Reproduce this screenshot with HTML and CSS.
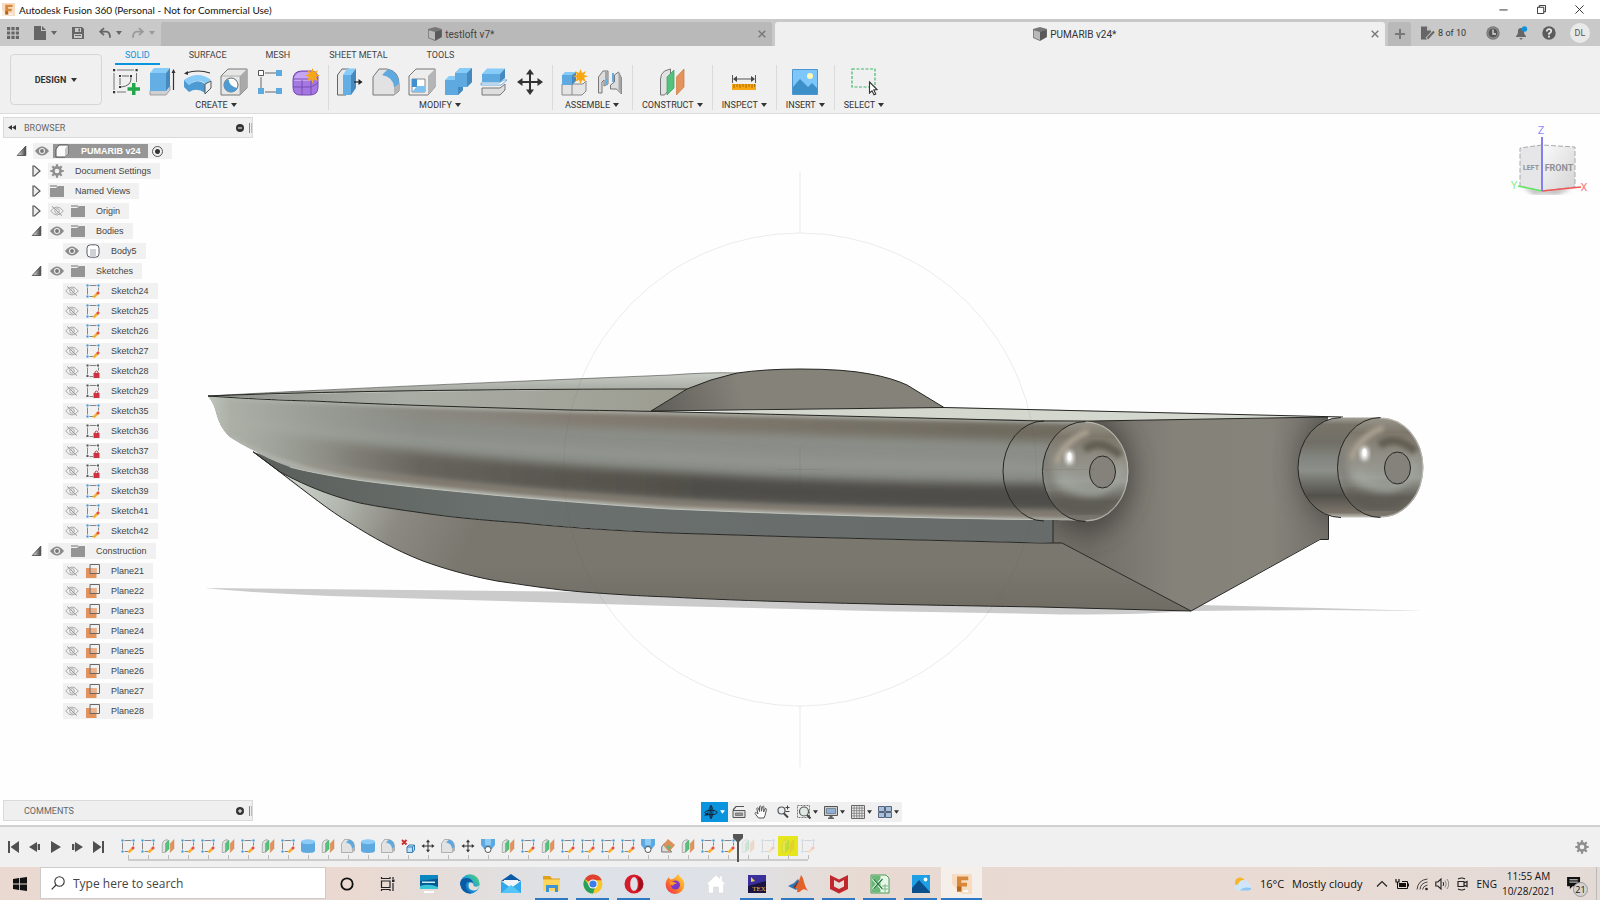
FILE: index.html
```html
<!DOCTYPE html>
<html lang="en">
<head>
    <meta charset="UTF-8">
    <meta name="viewport" content="width=device-width, initial-scale=1.0">
    <title>Autodesk Fusion 360 (Personal - Not for Commercial Use)</title>
    <link rel="stylesheet" href="styles.css">
</head>
<body>
    <!-- icon sprite -->
    <svg class="sprite" aria-hidden="true">
        <defs>
            <linearGradient id="blueTop" x1="0" y1="0" x2="0" y2="1"><stop offset="0" stop-color="#8ccbf5"/><stop offset="1" stop-color="#5aa6de"/></linearGradient>
            <linearGradient id="greyFace" x1="0" y1="0" x2="1" y2="1"><stop offset="0" stop-color="#f4f4f4"/><stop offset="1" stop-color="#b9b9b9"/></linearGradient>
            <linearGradient id="arrowFill" x1="0" y1="0" x2="1" y2="0"><stop offset="0" stop-color="#eee"/><stop offset="1" stop-color="#444"/></linearGradient>
            <linearGradient id="edgeFill" x1="0" y1="1" x2="1" y2="0"><stop offset="0" stop-color="#0c59a4"/><stop offset=".5" stop-color="#1b9de2"/><stop offset="1" stop-color="#5fdc5a"/></linearGradient>
            <linearGradient id="foxFill" x1="1" y1="0" x2="0" y2="1"><stop offset="0" stop-color="#ffe14a"/><stop offset=".5" stop-color="#ff8a1f"/><stop offset="1" stop-color="#f0205a"/></linearGradient>
        </defs>
        <symbol id="i-fusion" viewBox="0 0 16 16"><path fill="#f7dcc2" d="M0 0h16v16H0z"/><path fill="#fbeee0" d="M0 8 8 16H0z"/><path fill="#d8873a" d="M4 2h9v3H7.500v2H12v3H7.500v4H4z"/><path fill="#b5651d" d="M4 10h3.500v4H4z"/><path fill="#fff" d="M9 13h4v1.500H9z"/></symbol>
        <symbol id="i-caret" viewBox="0 0 6 6"><path fill="currentColor" d="M0 1h6L3 5z"/></symbol>
        <symbol id="i-apps" viewBox="0 0 12 12"><path fill="#666" d="M0 0h3.200v3.200H0zM4.400 0h3.200v3.200H4.400zM8.800 0H12v3.200H8.800zM0 4.400h3.200v3.200H0zM4.400 4.400h3.200v3.200H4.400zM8.800 4.400H12v3.200H8.800zM0 8.800h3.200V12H0zM4.400 8.800h3.200V12H4.400zM8.800 8.800H12V12H8.800z"/></symbol>
        <symbol id="i-file" viewBox="0 0 12 14"><path fill="#666" d="M0 0h7v5h5v9H0zM8 0l4 4H8z"/></symbol>
        <symbol id="i-save" viewBox="0 0 12 12"><path fill="#666" fill-rule="evenodd" d="M0 0h10l2 2v10H0zM3 1v4h6V1zM2 7v4h8V7zM6.500 1.500h1.500v3H6.500zM3 8h6v1H3z"/></symbol>
        <symbol id="i-undo" viewBox="0 0 12 11"><path fill="none" stroke="currentColor" stroke-width="1.800" d="M5 .7 1.200 4.200 5 7.700M1.500 4.200H7q4 0 4 6"/></symbol>
        <symbol id="i-redo" viewBox="0 0 12 11"><path fill="none" stroke="currentColor" stroke-width="1.800" d="M7 .7l3.800 3.500L7 7.700M10.500 4.200H5q-4 0-4 6"/></symbol>
        <symbol id="i-doc" viewBox="0 0 14 14"><path fill="#777" d="M0 2 7 0l7 2v8l-7 4-7-3z"/><path fill="#b8b8b8" d="M.8 3.300 7 5v8l-6.200-2.500z"/><path fill="#595959" d="M7 5l6.500-2v7L7 13.500z"/></symbol>
        <symbol id="i-x" viewBox="0 0 8 8"><path stroke="currentColor" stroke-width="1.400" d="M.7.7l6.600 6.600M7.300.7.700 7.300"/></symbol>
        <symbol id="i-jobs" viewBox="0 0 14 13"><path fill="#666" d="M0 0h6l4 4v2l-4 7H0z"/><path fill="#c8c8c8" d="M6 0v4h4z"/><path stroke="#c8c8c8" stroke-width="4" d="M6 12.500 13 5"/><path stroke="#666" stroke-width="2" d="M6.500 12 13 5"/></symbol>
        <symbol id="i-clock" viewBox="0 0 14 14"><circle cx="7" cy="7" r="6.700" fill="#777"/><circle cx="7" cy="7" r="5" fill="#555" stroke="#aaa" stroke-width=".7"/><path fill="none" stroke="#ddd" stroke-width="1.300" d="M7 3.500V8h3"/></symbol>
        <symbol id="i-bell" viewBox="0 0 14 14"><path fill="#666" d="M2 10q2-1 2-5 0-3 3-3t3 3q0 4 2 5v1H2zM5.500 12h3q0 1.500-1.500 1.500T5.500 12z"/><circle cx="10.500" cy="3" r="2.700" fill="#0a94de"/></symbol>
        <symbol id="i-help" viewBox="0 0 14 14"><circle cx="7" cy="7" r="6.700" fill="#5c5c5c"/><path fill="none" stroke="#e8e8e8" stroke-width="1.700" d="M4.800 5.500q0-2.300 2.200-2.300t2.200 2Q9.200 6.500 7 7.500v1.200"/><path fill="#e8e8e8" d="M6.100 9.800h1.800v1.600H6.100z"/></symbol>

        <!-- ribbon -->
        <symbol id="i-newsketch" viewBox="0 0 28 28"><path fill="none" stroke="#666" stroke-width=".9" d="M5 2h17M2 5v17M24.500 5v9M5 24h9"/><path fill="#333" d="M1 1h2.200v2.200H1zM23.500 1h2.200v2.200h-2.200zM1 23h2.200v2.200H1zM7 7h2v2H7zM18 7h2v2h-2zM7 18h2v2H7z"/><path fill="none" stroke="#666" d="M10 8h7M8 10v7M19 9q1 9-10 10"/><path fill="#22a84a" d="M20 15h3.500v4.200H28v3.500h-4.500V27H20v-4.300h-4.500v-3.500H20z"/></symbol>
        <symbol id="i-extrude" viewBox="0 0 28 28"><path fill="#d0d0d0" stroke="#888" stroke-width=".7" d="M2 23 6 18h16v4l-4 5H2z"/><path fill="#63aee4" d="M2 5h16v18H2z"/><path fill="#87cbf8" d="M2 5 6 0h16l-4 5z"/><path fill="#4589bf" d="M18 5l4-5v18l-4 5z"/><path stroke="#333" stroke-width="1.200" d="M25.500 3v19"/><path fill="#333" d="M25.500 1l2 4h-4z"/></symbol>
        <symbol id="i-revolve" viewBox="0 0 28 28"><path fill="none" stroke="#333" stroke-width="1.100" d="M2 5q12-4 24 0"/><path fill="#333" d="m0 5.500 4-2.500v4z"/><path fill="#87cbf8" d="M0 12Q14 2 27 12l-5 4Q14 9 5 17z"/><path fill="#4e9bd4" d="M0 12l5 5v7l-5-5zM5 17Q14 10 21 16v9q-8-6-16-1z"/><path fill="#eee" stroke="#555" d="m21 16 6-3v7l-6 6z"/></symbol>
        <symbol id="i-hole" viewBox="0 0 28 28"><path fill="#e6e6e6" stroke="#777" d="M1 8 8 1h19v19l-7 7H1z"/><path fill="#aaa" d="M20 8l7-7v19l-7 7z"/><path fill="none" stroke="#999" stroke-width=".7" d="M1 8h19v19"/><circle cx="11" cy="17" r="7" fill="#fff" stroke="#666"/><path fill="#4e9bd4" d="M8.500 11q1 8 9 9-2 4-6.500 4-7 0-7-7 0-4 4.500-6z"/></symbol>
        <symbol id="i-pattern" viewBox="0 0 28 28"><path stroke="#666" d="M9 5h11M5 9v12M9 24h11" fill="none"/><path fill="#fff" stroke="#555" d="M2.500 2.500h5v5h-5z"/><path fill="#5ea9e0" d="M20 2h6v6h-6zM2 20h6v6H2zM20 20h6v6h-6z"/></symbol>
        <symbol id="i-form" viewBox="0 0 28 28"><path fill="#a478e0" stroke="#7448b0" d="M1 12Q1 3 10 3h9q8 0 7 10v6q0 8-8 8H8q-7 0-7-8z"/><path fill="#c6a5f2" d="M2 10q2-6 8-6h9q5 0 6 4l-6 5H2z"/><path fill="none" stroke="#7448b0" stroke-width=".9" d="M1 19h18l7-4M10 27V12M19 27V10M1 11h18l7-3"/><path fill="#f7a614" d="m20.500 0 1.500 4 4-2-2 4 4 1.500-4 1.500 2 4-4-1.500-1.500 4-1.500-4-4 1.500 2-4-4-1.500L17 6l-2-4 4 2z"/></symbol>
        <symbol id="i-press" viewBox="0 0 28 28"><path fill="#e8e8e8" stroke="#666" d="M1.500 7 6 1h7v20l-3 6H1.500z"/><path fill="#63aee4" d="M7 7h8v20H7z"/><path fill="#87cbf8" d="M7 7l4-6.500h9L15 7z"/><path fill="#4589bf" d="M15 7l5-6.500V20l-5 7z"/><path stroke="#222" stroke-width="1.200" d="M18 14h5"/><path fill="#222" d="M22.500 11l4 3-4 3z"/></symbol>
        <symbol id="i-fillet" viewBox="0 0 28 28"><path fill="#e2e2e2" stroke="#777" d="M1 27V9l6-8h8q12 2 12 15v7l-5 4z"/><path fill="#b5b5b5" d="m22 27 5-4v-9l-5 2z"/><path fill="#5ea9e0" d="M10 7l6-6q11 3 11 15l-5 3Q21 9 10 7z"/></symbol>
        <symbol id="i-shell" viewBox="0 0 28 28"><path fill="#ededed" stroke="#777" d="M1 8 8 1h19v18l-7 8H1z"/><path fill="#b5b5b5" d="m20 8 7-7v18l-7 8z"/><path fill="#fff" stroke="#888" d="M4 11h13v13H4z"/><path fill="#3f90cf" d="M4 11h5v8H4z"/><path fill="#7cc1f0" d="M4 24l5-6h8v6z"/></symbol>
        <symbol id="i-combine" viewBox="0 0 28 28"><path fill="#5ea9e0" d="M1 12h10V5l5-5h12v14l-5 5h-4v3l-5 5H1z"/><path fill="#87cbf8" d="m11 5 5-5h12l-5 5zM1 12l4-4h6v4z"/><path fill="#4589bf" d="m23 5 5-5v14l-5 5zM14 19h5v3l-5 5z"/></symbol>
        <symbol id="i-split" viewBox="0 0 28 28"><path fill="#dedede" stroke="#777" d="M2 20h18l5-4v6l-5 5H2z"/><path fill="#5ea9e0" d="M2 6h18v8H2z"/><path fill="#87cbf8" d="m2 6 5-5.500h18L20 6z"/><path fill="#4589bf" d="m20 6 5-5.500V10l-5 4z"/><path fill="#fff" stroke="#4e9bd4" stroke-width=".8" d="M1 17h20l6-5h-3l-5 3H1z"/></symbol>
        <symbol id="i-move" viewBox="0 0 28 28"><path fill="#333" d="m14 1 4 5.500h-3v6.500h6.500v-3L27 14l-5.500 4v-3H15v6.500h3L14 27l-4-5.500h3V15H6.500v3L1 14l5.500-4v3H13V6.500h-3z"/></symbol>
        <symbol id="i-component" viewBox="0 0 28 28"><path fill="#e4e4e4" stroke="#888" d="M2 16h21l3-3v10l-4 4H2z"/><path stroke="#888" d="M12 16v11"/><path fill="#5ea9e0" d="M2 7h10v10H2z"/><path fill="#87cbf8" d="m2 7 3-3h11l-4 3z"/><path fill="#4589bf" d="m12 7 4-3v9l-4 4z"/><path fill="#f7a614" d="m20.500 1 1.500 4 4-2-2 4 4 1.200-4 1.500 2 4-4-1.700-1.500 4-1.500-4-4 1.700 2-4-4-1.500L17 7l-2-4 4 2z"/></symbol>
        <symbol id="i-joint" viewBox="0 0 28 28"><path fill="#ddd" stroke="#777" d="M2.500 25V9l4.500-6 5 0v13l-4 2v-6l-2 2v11zM25.500 26V10l-3-6-4 3v7l-4 3v4l6 0z"/><path fill="#a5a5a5" d="M25.500 26V10l-3-6v17zM9 4h3v12l-3 1z"/><path fill="#63aee4" d="M10 11h2v5l-2 1zM16 5h2v9h-2z"/></symbol>
        <symbol id="i-plane" viewBox="0 0 28 28"><path fill="#e2e2e2" stroke="#777" d="M2.500 27V11q0-5 4-8l6-2v19l-6 7z"/><path fill="#54c27c" stroke="#3c9c60" stroke-width=".7" d="M9 27V9l7-7v18z"/><path fill="#e5935c" stroke="#c87840" stroke-width=".7" d="M18.500 27V9L26 1v18z"/></symbol>
        <symbol id="i-measure" viewBox="0 0 28 28"><path fill="none" stroke="#555" d="M2.500 7v8M25.500 7v8M5 11h18"/><path fill="#444" d="m3 11 4-3v6zM25 11l-4-3v6z"/><path fill="#f7a614" d="M2 16h24v6H2z"/><path stroke="#9a6100" stroke-width=".8" d="M4 16v4M7 16v3M10 16v4M13 16v3M16 16v4M19 16v3M22 16v4M24.500 16v3"/></symbol>
        <symbol id="i-insert" viewBox="0 0 28 28"><path fill="#7cc6fa" stroke="#4e96cf" d="M1.500 1.500h25v25h-25z"/><circle cx="19" cy="8" r="3" fill="#fff8b8"/><path fill="#3d8fc9" d="M2 19l7-8 8 8 4-4 5 5v6H2z"/></symbol>
        <symbol id="i-select" viewBox="0 0 28 28"><path fill="none" stroke="#45b76c" stroke-width="1.200" stroke-dasharray="3 1.500" d="M2 1h23v18H2z"/><path fill="#fff" stroke="#333" stroke-width="1.100" d="m19.500 14 7.500 7.500-3.200.5 2 4-1.800.8-2-4-2.500 2.200z"/></symbol>

        <!-- browser tree -->
        <symbol id="i-eye" viewBox="0 0 14 10"><path fill="#8b8b8b" d="M0 5q7-9 14 0-7 9-14 0z"/><circle cx="7" cy="5" r="3" fill="#eee"/><circle cx="7" cy="5" r="1.900" fill="#777"/></symbol>
        <symbol id="i-eyeoff" viewBox="0 0 14 10"><path fill="none" stroke="#aaa" d="M.7 5q6.300-8 12.600 0Q7 13 .7 5z"/><circle cx="7" cy="5" r="2.300" fill="none" stroke="#aaa"/><path stroke="#999" d="m2 .3 10 9.400"/></symbol>
        <symbol id="i-closed" viewBox="0 0 10 12"><path fill="#ececec" stroke="#555" stroke-width="1.200" d="M1.500 1H3l5.500 5L3 11H1.500z"/></symbol>
        <symbol id="i-open" viewBox="0 0 10 12"><path fill="url(#arrowFill)" stroke="#444" stroke-width=".8" d="M9.300 1v9.500H.7z"/></symbol>
        <symbol id="i-cube" viewBox="0 0 14 14"><path fill="#fafafa" stroke="#555" d="M1 5 4 1h9v9l-3 3H1z"/><path fill="#c4c4ca" d="m10 5 3-4v9l-3 3z"/></symbol>
        <symbol id="i-body" viewBox="0 0 14 14"><rect x="1" y=".8" width="12" height="12.400" rx="3.500" fill="#fff" stroke="#555c68"/><path fill="#cfcfd6" d="M4 5h6v8H4z"/></symbol>
        <symbol id="i-gear" viewBox="0 0 14 14"><circle cx="7" cy="7" r="3.600" fill="none" stroke="#8f8f8f" stroke-width="2.600"/><path stroke="#8f8f8f" stroke-width="2.200" d="M7 .3v2.500M7 11.200v2.500M.3 7h2.500M11.200 7h2.500M2.300 2.300 4 4M10 10l1.700 1.700M11.700 2.300 10 4M4 10l-1.700 1.700"/></symbol>
        <symbol id="i-folder" viewBox="0 0 14 12"><path fill="#b0b0b0" d="M0 0h7v2H0z"/><path fill="#959595" d="M0 3h6l2-2h6v11H0z"/></symbol>
        <symbol id="i-sketch" viewBox="0 0 14 14"><path fill="none" stroke="#777" stroke-width=".9" d="M3.500 1.500h7M1.500 3.500v7M12.500 3.500v3M3.500 12.500H7"/><path fill="#2a93dc" d="M.5.500h2v2h-2zM11.500.5h2v2h-2zM.5 11.500h2v2h-2z"/><path stroke="#f5b02e" stroke-width="2.500" d="m7.500 13.500 4-4"/><path stroke="#e8504a" stroke-width="2.500" d="m11 10 2-2"/></symbol>
        <symbol id="i-locked" viewBox="0 0 14 14"><path fill="none" stroke="#777" stroke-width=".9" d="M3.500 1.500h7M1.500 3.500v7M12.500 3.500v3M3.500 12.500H7"/><path fill="#555" d="M.5.500h2v2h-2zM11 .5h2v2h-2zM.5 11h2v2h-2z"/><path fill="#cc3340" d="M7.500 9h6v5h-6z"/><path fill="none" stroke="#cc3340" d="M9 9V8q1.500-2 3 0v1"/></symbol>
        <symbol id="i-cplane" viewBox="0 0 14 14"><path fill="#e5935c" d="M0 4h10.500v10H0z"/><path fill="#eab28c" d="M3.500 4h7v6h-7z"/><path fill="none" stroke="#666" d="M4 10V.5h9.500v9H4"/></symbol>

        <!-- timeline -->
        <symbol id="i-cyl" viewBox="0 0 14 14"><path fill="#5ea9e0" d="M0 2.500h14v9q0 2.500-7 2.500T0 11.500z"/><ellipse cx="7" cy="2.700" rx="7" ry="2.500" fill="#8ccbf5"/></symbol>
        <symbol id="i-delete" viewBox="0 0 14 14"><path stroke="#d02c2c" stroke-width="1.800" d="m1 1 4.500 4.500M5.500 1 1 5.500"/><path fill="#bfe0f7" stroke="#3a7fb5" d="m6 8 2-2h5.500v5l-2 2.500H6zM6 8h5.500v5M11.500 8l2-2"/></symbol>
        <symbol id="i-hull" viewBox="0 0 14 14"><path fill="#5ea9e0" d="M0 0h14v6l-3 4H3L0 6z"/><path fill="#8ccbf5" d="M4 0h6v6H4z"/><circle cx="7" cy="10.500" r="3" fill="#fff" stroke="#555"/></symbol>
        <symbol id="i-shape" viewBox="0 0 14 14"><path fill="#ddd" stroke="#777" d="M.7 13V8l3-4 7 9z"/><path fill="#dc8f5a" d="m7 0 7 6-6 7-6-7z"/><path fill="#60b878" d="M5 8q2-3 5 0L8 11z"/></symbol>
        <symbol id="i-marker" viewBox="0 0 10 28"><path fill="#555" d="M0 0h10v4L6 8v20H4V8L0 4z"/></symbol>
        <symbol id="i-first" viewBox="0 0 12 12"><path fill="#505050" d="M0 0h2v12H0zM11 0v12L2.500 6z"/></symbol>
        <symbol id="i-prev" viewBox="0 0 12 12"><path fill="#505050" d="M8 1v10L0 6zM8.700 3H11v6H8.700z"/></symbol>
        <symbol id="i-play" viewBox="0 0 12 12"><path fill="#505050" d="m1 0 10 6-10 6z"/></symbol>
        <symbol id="i-next" viewBox="0 0 12 12"><path fill="#505050" d="M4 1v10l8-5zM1 3h2.300v6H1z"/></symbol>
        <symbol id="i-last" viewBox="0 0 12 12"><path fill="#505050" d="M10 0h2v12h-2zM1 0v12l8.500-6z"/></symbol>

        <!-- navigation bar -->
        <symbol id="i-orbit" viewBox="0 0 14 14"><ellipse cx="7" cy="7.500" rx="6" ry="2.200" fill="none" stroke="#123"/><ellipse cx="7" cy="7" rx="2" ry="6" fill="none" stroke="#123" stroke-width=".8"/><path stroke="#123" stroke-width="1.300" d="M7 0v14"/><path fill="#123" d="M0 10.500h4V7z"/></symbol>
        <symbol id="i-lookat" viewBox="0 0 14 14"><path fill="#ddd" stroke="#555" d="M1 5.500h12v7H1z"/><path fill="none" stroke="#555" stroke-width="1.200" d="m1 5 3-3.500h8"/><path fill="#999" stroke="#555" stroke-width=".6" d="M3.500 8h7v2.500h-7z"/></symbol>
        <symbol id="i-pan" viewBox="0 0 14 14"><path fill="#fff" stroke="#555" d="M4.500 13 1 8.500q0-1.500 1.700-.7L4 9 2.800 3.500q.4-1.300 1.500-.3L5.600 6.500 5.500 1.500q.7-1.200 1.600 0l.4 4.700.9-4.500q1-1 1.600 0L9.600 7l1.500-3.300q1.200-.7 1.400.6L11 10.500 10 13z"/></symbol>
        <symbol id="i-zoomw" viewBox="0 0 14 14"><circle cx="5.500" cy="5.500" r="3.500" fill="#e8eef2" stroke="#555" stroke-width="1.200"/><path stroke="#444" stroke-width="2" d="m8 8.500 4 4"/><path stroke="#444" d="M9.500 2.500h4M11.500.5v4M9.500 6.500h4"/></symbol>
        <symbol id="i-zoomfit" viewBox="0 0 14 14"><path fill="none" stroke="#777" stroke-dasharray="2 1" d="M.5.500h12v12H.5z"/><circle cx="7" cy="6.500" r="4.500" fill="#dfe9e4" stroke="#555" stroke-width="1.200"/><path stroke="#444" stroke-width="2" d="m10 10 3.500 3.500"/></symbol>
        <symbol id="i-display" viewBox="0 0 14 14"><path fill="#ccc" stroke="#555" d="M.5 1.500h13v9H.5z"/><path fill="#8fb0d4" stroke="#567" stroke-width=".6" d="M2.500 3.500h9v5h-9z"/><path fill="#666" d="M5.500 11h3v1.500H10V14H4v-1.500h1.500z"/></symbol>
        <symbol id="i-grid" viewBox="0 0 14 14"><path fill="#eee" stroke="#666" d="M.5.500h13v13H.5z"/><path stroke="#777" stroke-width=".8" d="M3.100.5v13M5.700.5v13M8.300.5v13M10.900.5v13M.5 3.100h13M.5 5.700h13M.5 8.300h13M.5 10.900h13"/></symbol>
        <symbol id="i-views" viewBox="0 0 14 14"><path fill="#a9c0dc" stroke="#56657a" d="M.5 1.500h6v5h-6zM7.500 1.500h6v5h-6zM.5 7.500h6v5h-6zM7.500 7.500h6v5h-6z"/></symbol>

        <!-- taskbar -->
        <symbol id="i-windows" viewBox="0 0 14 14"><path fill="#111" d="m0 2 6-.9v5.500H0zM6.800 1 14 0v6.600H6.800zM0 7.400h6v5.500L0 12zM6.800 7.400H14V14l-7.200-1z"/></symbol>
        <symbol id="i-search" viewBox="0 0 14 14"><circle cx="8.500" cy="5.500" r="4.700" fill="none" stroke="#333" stroke-width="1.100"/><path stroke="#333" stroke-width="1.200" d="M5 9 .7 13.300"/></symbol>
        <symbol id="i-cortana" viewBox="0 0 20 20"><circle cx="10" cy="10" r="5.700" fill="none" stroke="#111" stroke-width="1.800"/></symbol>
        <symbol id="i-taskview" viewBox="0 0 20 20"><path fill="none" stroke="#222" stroke-width="1.200" d="M3.500 7h8.500v6.500H3.500zM3.500 3v1.500H12V3M3.500 17v-1.500H12V17M15 3v2M15 9v8"/><path fill="#222" d="M14 5.500h2.500V8H14z"/></symbol>
        <symbol id="i-lenovo" viewBox="0 0 20 20"><path fill="#045a94" d="M1 1h18v14H1z"/><path fill="#0a87c0" d="M1 1h18v3.500L1 7z"/><path fill="#39c5d8" d="M1 12q9-3 18 1v2H1z"/><path fill="#cbe9f7" d="M3 7.500h13V9H3z"/><path fill="#fff" d="M5 17h10v2H5z"/></symbol>
        <symbol id="i-edge" viewBox="0 0 20 20"><circle cx="10" cy="10" r="9.700" fill="url(#edgeFill)"/><path fill="#0c59a4" d="M6 10q-1 7 6 9-9 2-12-9 0-6 6-6 6 0 7 5-5-3-7 1z"/><path fill="#e4ddd8" d="M10 8.500q4 0 3.500 3.500 4 2 6-1-1 5-5 5.500-6 0-6-5 0-2 1.500-3z"/></symbol>
        <symbol id="i-mail" viewBox="0 0 20 20"><path fill="#0b5ba8" d="m10 0 10 7H0z"/><path fill="#f0f4f8" d="M3 6h14v9H3z"/><path fill="#2fa9ec" d="M0 7l10 7 10-7v12H0z"/><path fill="#55c5f8" d="M0 19 10 11l10 8z"/></symbol>
        <symbol id="i-explorer" viewBox="0 0 20 20"><path fill="#e0a21d" d="M1 2h7l2 2.500h8V9H1z"/><path fill="#ffd65c" d="M1 5.500h17V17H1z"/><path fill="#3e94d6" d="M4 11h12v7h-3v-4H7v4H4z"/></symbol>
        <symbol id="i-chrome" viewBox="0 0 20 20"><circle cx="10" cy="10" r="9.500" fill="#f6c62c"/><path fill="#de4233" d="M10 10 1.800 5.200a9.500 9.500 0 0 1 16.900 1H10z"/><path fill="#26a05a" d="M10 19.500A9.500 9.500 0 0 1 1.800 5.200L6.300 12l3.700 2 2-.5z"/><circle cx="10" cy="10" r="4.600" fill="#fff"/><circle cx="10" cy="10" r="3.600" fill="#3b7ded"/></symbol>
        <symbol id="i-opera" viewBox="0 0 20 20"><path fill="#d81b2a" fill-rule="evenodd" d="M10 .5a9.500 9.500 0 1 0 0 19 9.500 9.500 0 1 0 0-19zM10 3q3.800 1 3.800 7T10 17q-3.800-1-3.800-7T10 3z"/><path fill="#9b101c" d="M13.500 3q3.500 7-.5 14 5 0 6.300-7-.8-6-5.800-7z"/></symbol>
        <symbol id="i-firefox" viewBox="0 0 20 20"><path fill="url(#foxFill)" d="M13 0q2 3 4 4.500 2.500 3 2.300 6.500a9.300 9 0 0 1-18.600 0Q.7 6 4 3q0 2 2 2.500Q10 5 13 0z"/><circle cx="10.500" cy="11" r="4.500" fill="#7a38c8"/><path fill="#ff9a2a" d="M5 8q4-1 7 1.500-3 0-4 2-3 0-3-3.500z"/></symbol>
        <symbol id="i-home" viewBox="0 0 20 20"><path fill="#fff" stroke="#cfcfcf" stroke-width=".4" d="m10 1 3.500 3.300V2h2.700v4.800L20 10.500h-2.500V19h-5v-6h-5v6h-5v-8.500H0z"/></symbol>
        <symbol id="i-matlab" viewBox="0 0 20 20"><path fill="#2f78b5" d="m0 12 6-3 4-4 2 6-4 5z"/><path fill="#e2622a" d="M13 1q2 2 3 7t4 9q-4-3-6-1-3 3-5 2 1-4-2-4Q11 9 13 1z"/><path fill="#8c2416" d="M13 1q-2 6-6 13l-2-1q5-4 8-12z"/></symbol>
        <symbol id="i-mcafee" viewBox="0 0 20 20"><path fill="#c0282d" d="m1 1 9 4.500L19 1v14l-9 4.500L1 15z"/><path fill="#e8dcd6" d="m5 6 5 2.800L15 6v6.500l-5 2.500-5-2.500z"/></symbol>
        <symbol id="i-excel" viewBox="0 0 20 20"><path fill="#eaf5ea" stroke="#4a9a58" d="M1 1h15l3 3v15H1z"/><path fill="#69b877" d="M1.500 1.500h9v17h-9z"/><path stroke="#fff" stroke-width="2.400" d="m3 5 9 10M12 5 3 15"/><path stroke="#1f7a36" stroke-width="1.200" d="m3.500 5 9 10M12.500 5l-9 10"/><path stroke="#7ab985" d="M12 12h6M12 15h6M15 10v8"/></symbol>
        <symbol id="i-photos" viewBox="0 0 20 20"><path fill="#1fa0e6" d="M1 1h18v18H1z"/><path fill="#0b4f8c" d="M1 14 8 6l11 12v1H1z"/><circle cx="14.500" cy="5.500" r="1.900" fill="#fff"/></symbol>
        <symbol id="i-weather" viewBox="0 0 18 14"><circle cx="6" cy="5.500" r="5" fill="#f8b52c"/><path fill="#cfe6fa" d="M4 13.500q-3.500 0-3.500-3T4 7.500Q5.500 3 9.500 3q4 0 5 4 3 .5 3 3.200T14 13.500z"/><path fill="#8ec6f2" d="M6 13.500q3-4 11.300-2.500Q17 13.500 14 13.500z"/></symbol>
        <symbol id="i-chevron" viewBox="0 0 14 14"><path fill="none" stroke="#222" stroke-width="1.200" d="m2 9.500 5-5 5 5"/></symbol>
        <symbol id="i-battery" viewBox="0 0 14 14"><path fill="#111" d="M4 6h7v4H4z"/><path fill="none" stroke="#111" d="M2.500 7v4.500h10v-7H7M13.500 6.500v3"/><path fill="none" stroke="#111" stroke-width="1.200" d="M1 2v3h3V2M2.500 5v3"/></symbol>
        <symbol id="i-wifi" viewBox="0 0 14 14"><g fill="none" stroke="#444"><path d="M2 12.500Q3 3 12.500 2"/><path d="M5 12.500Q5.500 6 12.500 5"/><path d="M7.500 12.500Q8 9 12.500 8"/></g><circle cx="11.500" cy="12" r="1.300" fill="#222"/></symbol>
        <symbol id="i-volume" viewBox="0 0 14 14"><path fill="none" stroke="#222" stroke-width="1.100" d="M.8 5h2L6 2v10L2.800 9h-2z"/><path fill="none" stroke="#222" d="M8 5q1.500 2 0 4"/><path fill="none" stroke="#888" d="M10 3.500q2.500 3.500 0 7M12 2q3.500 5 0 10"/></symbol>
        <symbol id="i-meet" viewBox="0 0 14 14"><path fill="none" stroke="#222" stroke-width="1.200" d="M3 4.500h6v5H3zM9 6l3-1.500v5L9 8M3 2q4-2 7 0M3 12q4 2 7 0"/></symbol>
        <symbol id="i-note" viewBox="0 0 16 14"><path fill="#111" d="M0 0h14v10H6l-3 3v-3H0z"/><path stroke="#eee" d="M2.500 3h9M2.500 5.500h9"/></symbol>
    </svg>

    <header class="titlebar">
        <svg class="app-icon"><use href="#i-fusion"/></svg>
        <h1>Autodesk Fusion 360 (Personal - Not for Commercial Use)</h1>
        <div class="window-controls">
            <button aria-label="Minimize"><svg viewBox="0 0 10 10"><path stroke="#222" d="M.5 5.500h9"/></svg></button>
            <button aria-label="Restore"><svg viewBox="0 0 10 10"><path fill="none" stroke="#222" d="M.5 2.500h7v7h-7zM2.500 2.500v-2h7v7h-2"/></svg></button>
            <button aria-label="Close"><svg viewBox="0 0 10 10"><path stroke="#222" d="m.5.500 9 9M9.500.500l-9 9"/></svg></button>
        </div>
    </header>

    <div class="docbar">
        <div class="quick-access">
            <button aria-label="Data panel"><svg class="s12"><use href="#i-apps"/></svg></button>
            <button aria-label="File"><svg class="file-icon"><use href="#i-file"/></svg><svg class="caret"><use href="#i-caret"/></svg></button>
            <button aria-label="Save"><svg class="s12"><use href="#i-save"/></svg></button>
            <button aria-label="Undo"><svg class="s12"><use href="#i-undo"/></svg><svg class="caret"><use href="#i-caret"/></svg></button>
            <button class="faded" aria-label="Redo"><svg class="s12"><use href="#i-redo"/></svg><svg class="caret"><use href="#i-caret"/></svg></button>
        </div>
        <div class="doc-tab">
            <span class="doc-name"><svg class="s14"><use href="#i-doc"/></svg>testloft v7*</span>
            <button aria-label="Close testloft"><svg class="s8"><use href="#i-x"/></svg></button>
        </div>
        <div class="doc-tab active">
            <span class="doc-name"><svg class="s14"><use href="#i-doc"/></svg>PUMARIB v24*</span>
            <button aria-label="Close PUMARIB"><svg class="s8"><use href="#i-x"/></svg></button>
        </div>
        <button class="new-tab" aria-label="New tab"><svg viewBox="0 0 10 10"><path stroke="#777" stroke-width="2" d="M5 0v10M0 5h10"/></svg></button>
        <div class="account">
            <button class="jobs"><svg class="s14"><use href="#i-jobs"/></svg>8 of 10</button>
            <button aria-label="Job status"><svg class="s14"><use href="#i-clock"/></svg></button>
            <button aria-label="Notifications"><svg class="s14"><use href="#i-bell"/></svg></button>
            <button aria-label="Help"><svg class="s14"><use href="#i-help"/></svg></button>
            <button class="avatar">DL</button>
        </div>
    </div>

    <div class="ribbon">
        <button class="workspace">DESIGN <svg class="caret"><use href="#i-caret"/></svg></button>
        <div class="ribbon-main">
            <nav class="ribbon-tabs">
                <a href="#" class="active">SOLID</a>
                <a href="#">SURFACE</a>
                <a href="#">MESH</a>
                <a href="#">SHEET METAL</a>
                <a href="#">TOOLS</a>
            </nav>
            <div class="tool-groups">
                <section class="tool-group">
                    <div class="tools">
                        <button aria-label="Create Sketch"><svg><use href="#i-newsketch"/></svg></button>
                        <button aria-label="Extrude"><svg><use href="#i-extrude"/></svg></button>
                        <button aria-label="Revolve"><svg><use href="#i-revolve"/></svg></button>
                        <button aria-label="Hole"><svg><use href="#i-hole"/></svg></button>
                        <button aria-label="Pattern"><svg><use href="#i-pattern"/></svg></button>
                        <button aria-label="Create Form"><svg><use href="#i-form"/></svg></button>
                    </div>
                    <button class="group-label">CREATE <svg class="caret"><use href="#i-caret"/></svg></button>
                </section>
                <section class="tool-group">
                    <div class="tools">
                        <button aria-label="Press Pull"><svg><use href="#i-press"/></svg></button>
                        <button aria-label="Fillet"><svg><use href="#i-fillet"/></svg></button>
                        <button aria-label="Shell"><svg><use href="#i-shell"/></svg></button>
                        <button aria-label="Combine"><svg><use href="#i-combine"/></svg></button>
                        <button aria-label="Split Body"><svg><use href="#i-split"/></svg></button>
                        <button aria-label="Move"><svg><use href="#i-move"/></svg></button>
                    </div>
                    <button class="group-label">MODIFY <svg class="caret"><use href="#i-caret"/></svg></button>
                </section>
                <section class="tool-group">
                    <div class="tools">
                        <button aria-label="New Component"><svg><use href="#i-component"/></svg></button>
                        <button aria-label="Joint"><svg><use href="#i-joint"/></svg></button>
                    </div>
                    <button class="group-label">ASSEMBLE <svg class="caret"><use href="#i-caret"/></svg></button>
                </section>
                <section class="tool-group single">
                    <div class="tools"><button aria-label="Offset Plane"><svg><use href="#i-plane"/></svg></button></div>
                    <button class="group-label">CONSTRUCT <svg class="caret"><use href="#i-caret"/></svg></button>
                </section>
                <section class="tool-group single">
                    <div class="tools"><button aria-label="Measure"><svg><use href="#i-measure"/></svg></button></div>
                    <button class="group-label">INSPECT <svg class="caret"><use href="#i-caret"/></svg></button>
                </section>
                <section class="tool-group single">
                    <div class="tools"><button aria-label="Insert Image"><svg><use href="#i-insert"/></svg></button></div>
                    <button class="group-label">INSERT <svg class="caret"><use href="#i-caret"/></svg></button>
                </section>
                <section class="tool-group single">
                    <div class="tools"><button aria-label="Select"><svg><use href="#i-select"/></svg></button></div>
                    <button class="group-label">SELECT <svg class="caret"><use href="#i-caret"/></svg></button>
                </section>
            </div>
        </div>
    </div>

    <main class="canvas">
        <svg class="model" viewBox="0 114 1600 711" role="img" aria-label="PUMARIB hull model">
            <defs>
                <filter id="b2" x="-20%" y="-50%" width="140%" height="200%"><feGaussianBlur stdDeviation="2"/></filter>
                <filter id="b5" x="-20%" y="-50%" width="140%" height="200%"><feGaussianBlur stdDeviation="5"/></filter>
                <filter id="b12" x="-50%" y="-50%" width="200%" height="200%"><feGaussianBlur stdDeviation="12"/></filter>
                <linearGradient id="gHull" gradientUnits="userSpaceOnUse" x1="285" y1="480" x2="460" y2="560"><stop offset="0" stop-color="#d0d6ce"/><stop offset=".3" stop-color="#b3b8b0"/><stop offset=".62" stop-color="#8b8981"/><stop offset="1" stop-color="#7a776f"/></linearGradient>
                <linearGradient id="gHullDark" x1="0" y1="0" x2="0" y2="1"><stop offset=".55" stop-color="#6c6860" stop-opacity="0"/><stop offset="1" stop-color="#6c6860" stop-opacity=".7"/></linearGradient>
                <linearGradient id="gChine" x1="0" y1="0" x2="1" y2="0"><stop offset="0" stop-color="#5a5f5c"/><stop offset=".3" stop-color="#6a706d"/><stop offset="1" stop-color="#676c6a"/></linearGradient>
                <linearGradient id="gDeck" gradientUnits="userSpaceOnUse" x1="208" y1="0" x2="700" y2="0"><stop offset="0" stop-color="#8e918a"/><stop offset=".4" stop-color="#aaada5"/><stop offset="1" stop-color="#9c9c90"/></linearGradient>
                <linearGradient id="gFar" gradientUnits="userSpaceOnUse" x1="0" y1="372" x2="0" y2="392"><stop offset="0" stop-color="#c9cec6"/><stop offset="1" stop-color="#a4a79f"/></linearGradient>
                <linearGradient id="gBow" gradientUnits="userSpaceOnUse" x1="205" y1="0" x2="420" y2="0"><stop offset="0" stop-color="#c3c9c0"/><stop offset=".12" stop-color="#b0b5ac" stop-opacity=".85"/><stop offset="1" stop-color="#a0a49c" stop-opacity="0"/></linearGradient>
                <linearGradient id="gUpper" gradientUnits="userSpaceOnUse" x1="300" y1="0" x2="1000" y2="0"><stop offset="0" stop-color="#8f8a80" stop-opacity="0"/><stop offset=".4" stop-color="#827b71"/><stop offset="1" stop-color="#6f6a5f"/></linearGradient>
                <linearGradient id="gLower" gradientUnits="userSpaceOnUse" x1="240" y1="0" x2="700" y2="0"><stop offset="0" stop-color="#7c7970" stop-opacity="0"/><stop offset=".25" stop-color="#6f6b63"/><stop offset=".6" stop-color="#5c5a53"/><stop offset="1" stop-color="#504e48"/></linearGradient>
                <linearGradient id="gDome" gradientUnits="userSpaceOnUse" x1="655" y1="410" x2="740" y2="385"><stop offset="0" stop-color="#605e59"/><stop offset="1" stop-color="#85827a"/></linearGradient>
                <linearGradient id="gTransom" gradientUnits="userSpaceOnUse" x1="1090" y1="0" x2="1330" y2="0"><stop offset="0" stop-color="#716e67"/><stop offset=".35" stop-color="#85827a"/><stop offset=".75" stop-color="#86837b"/><stop offset="1" stop-color="#716f69"/></linearGradient>
                <linearGradient id="gTube" x1="0" y1="0" x2="0" y2="1"><stop offset="0" stop-color="#a3a198"/><stop offset=".07" stop-color="#78746a"/><stop offset=".25" stop-color="#716e65"/><stop offset=".4" stop-color="#82857f"/><stop offset=".53" stop-color="#8d908a"/><stop offset=".65" stop-color="#6f706a"/><stop offset=".78" stop-color="#53514b"/><stop offset=".95" stop-color="#7b746a"/><stop offset="1" stop-color="#c6c8c0"/></linearGradient>
                <linearGradient id="gBall" x1="0" y1="0" x2="0" y2="1"><stop offset="0" stop-color="#9a968b"/><stop offset=".15" stop-color="#7d776b"/><stop offset=".35" stop-color="#8f8c83"/><stop offset=".6" stop-color="#9a9d96"/><stop offset=".8" stop-color="#605e57"/><stop offset="1" stop-color="#7f7a70"/></linearGradient>
                <clipPath id="cTube"><path d="M208 396C250 399 300 401 313 401C390 405 500 408 570 410C650 411 720 413 800 415C880 417 960 419 1084 421V521C1050 520 900 518 827 515C760 513 720 511 670 509C620 506 560 501 503 496C440 490 400 486 357 480C320 474 305 471 290 467C270 460 262 455 253 450C243 445 236 441 230 437C222 430 218 420 216 412C214 404 211 400 208 396z"/></clipPath>
                <clipPath id="cBall"><ellipse cx="43" cy="50" rx="43" ry="50"/></clipPath>
                <clipPath id="cTransom"><path d="M1053 421H1093L1328 417V539H1320L1191 611L1062 543H1053z"/></clipPath>
                <g id="ball">
                    <g clip-path="url(#cBall)">
                        <path fill="url(#gBall)" d="M0 0h87v100H0z"/>
                        <path fill="none" stroke="#aaa192" stroke-width="6" filter="url(#b2)" d="M14 42Q20 20 46 10"/>
                        <path fill="none" stroke="#645e52" stroke-width="8" filter="url(#b2)" d="M42 28Q58 16 78 34"/>
                        <path fill="none" stroke="#a4a8a2" stroke-width="8" filter="url(#b5)" d="M18 56Q34 72 56 70Q72 62 76 44"/>
                        <path fill="none" stroke="#74736c" stroke-width="7" filter="url(#b5)" d="M2 30Q2 60 16 82"/>
                        <path fill="none" stroke="#5c5a52" stroke-width="12" filter="url(#b5)" d="M8 76Q30 94 66 84"/>
                        <ellipse cx="27" cy="36" rx="4" ry="7" fill="#fff" filter="url(#b2)"/>
                        <ellipse cx="27" cy="35" rx="2" ry="4" fill="#fff"/>
                        <path fill="none" stroke="#c6c6be" stroke-width="1.500" opacity=".7" d="M43 .5A42.500 49.500 0 0 1 43 99.500"/>
                    </g>
                    <path class="edge" d="M43 0A43 50 0 0 0 43 100"/>
                    <ellipse cx="60" cy="50.500" rx="13" ry="16" class="edge" fill="#85827b"/>
                </g>
            </defs>

            <!-- ground shadow -->
            <path fill="#cbcbcb" d="M205 588L600 592L1190 611L1200 605L1320 608L1424 611L1320 610L1190 611Q1120 616 1040 614L870 611L670 606L467 600L330 596Q240 592 205 588z"/>

            <!-- hull bottom -->
            <path fill="url(#gHull)" d="M253 451.700C275 468 290 481 290 481C310 495 330 511 350 523C372 537 395 550 423 561C445 569 470 576 497 581C525 585 555 590 583 592C610 594 640 596 670 597C740 601 850 604 1040 607L1191 611L1062 543L1040 543L800 537L670 533C620 531 560 527 523 523C480 520 450 517 423 513C395 509 380 507 360 503C335 497 310 488 280 472z"/>
            <path fill="url(#gHullDark)" d="M350 523C372 537 395 550 423 561C445 569 470 576 497 581C525 585 555 590 583 592C740 601 850 604 1040 607L1191 611L1062 543L800 537L670 533C560 527 523 523 423 513z"/>
            <path fill="url(#gChine)" d="M253 451.700L280 472C310 488 335 497 360 503C395 510 460 519 523 523C580 528 630 531 670 533L800 537L1053 543V519L827 512L670 505L503 492L357 476L290 464z"/>

            <!-- bow tube, far side and deck -->
            <path fill="url(#gFar)" d="M208 396C330 389 500 382 670 375Q710 372 737 373L687 389C500 390 350 392 208 396z"/>
            <path fill="url(#gDeck)" d="M208 396C350 392 500 390 687 389L651 412C500 409 370 405 313 401z"/>
            <path fill="#d3d7ce" d="M690 412L944 407L1343 417L1093 421L1040 421L800 415z"/>

            <!-- transom -->
            <path fill="url(#gTransom)" d="M1053 421H1093L1328 417V539H1320L1191 611L1062 543H1053z"/>
            <g clip-path="url(#cTransom)">
                <ellipse cx="1086" cy="474" rx="46" ry="60" fill="#45433f" filter="url(#b12)" opacity=".85"/>
                <ellipse cx="1332" cy="467" rx="34" ry="54" fill="#4a4844" filter="url(#b12)" opacity=".7"/>
            </g>
            <path class="edge" d="M1053 520V543M1062 543L1191 611L1320 539.500H1328.500V515"/>

            <!-- near tube -->
            <g clip-path="url(#cTube)">
                <path fill="#8b8e88" d="M200 380H1090V530H200z"/>
                <path fill="none" stroke="url(#gUpper)" stroke-width="20" filter="url(#b5)" d="M240 404C440 412 800 427 1160 434"/>
                <path fill="none" stroke="#929690" stroke-width="10" filter="url(#b5)" d="M200 420C400 443 600 454 800 463L1160 470"/>
                <path fill="none" stroke="url(#gLower)" stroke-width="28" filter="url(#b5)" d="M230 436C340 464 560 480 670 486C780 493 900 497 1160 499"/>
                <path fill="none" stroke="#827a70" stroke-width="8" filter="url(#b2)" d="M300 466C420 484 560 496 670 504C780 510 900 513 1160 516"/>
                <path fill="none" stroke="#c3c7be" stroke-width="3" filter="url(#b2)" d="M208 396C250 399 300 401 313 401C390 405 500 408 570 410C720 413 960 419 1084 421"/>
                <path fill="none" stroke="#d2d4cc" stroke-width="3" d="M230 437C262 458 305 471 357 480C400 486 440 490 503 496C560 501 620 506 670 509C760 513 900 518 1084 521" filter="url(#b2)"/>
                <path fill="url(#gBow)" d="M200 380H440V530H200z"/>
            </g>
            <path fill="none" stroke="#bfc2ba" d="M290 467C305 471 320 474 357 480C400 486 440 490 503 496C560 501 620 506 670 509C760 513 900 518 1033 519.500"/>

            <!-- cabin -->
            <path fill="url(#gDome)" class="edge" d="M651 411L687 389Q710 379 737 373Q765 369 800 369Q845 369 870 374Q892 378 907 385L944 407.500z"/>

            <g fill="none">
                <path class="edge" d="M208 396C330 391 500 389 687 389M208 396C250 399 300 401 313 401C390 405 500 408 570 410C650 411 720 413 800 415C880 417 960 419 1040 421H1093L1328 417M944 407.500L1343 417"/>
                <path class="edge thin" d="M208 396C330 389 500 382 670 375Q710 372 737 373"/>
                <path class="edge" d="M253 451.700L280 472C310 488 335 497 360 503C380 507 395 509 423 513C450 517 480 520 523 523C560 527 620 531 670 533L800 537L1040 543H1062"/>
                <path class="edge" d="M253 451.700L280 472C310 495 330 511 350 523C372 537 395 550 423 561C445 569 470 576 497 581C525 585 555 590 583 592C610 594 640 596 670 597C740 601 850 604 1040 607L1191 611"/>
                <path class="edge" d="M1044 421A41 50 0 0 0 1044 521"/>
            </g>

            <!-- tube ends -->
            <path fill="url(#gTube)" d="M1341 417.500H1380V517.500H1341A43 50 0 0 1 1341 417.500z"/>
            <path class="edge" d="M1341 417.500A43 50 0 0 0 1341 517.500"/>
            <use href="#ball" x="1042.500" y="421.500"/>
            <use href="#ball" x="1337.500" y="417.500"/>

            <g fill="none" stroke="#555" stroke-opacity=".11">
                <circle cx="800" cy="469.500" r="236.500"/>
                <path d="M800 172V233M800 706V767M800 446V493M777 469.500H823M1040 469.500H1094"/>
            </g>
        </svg>

        <svg class="viewcube" viewBox="1508 120 84 80" role="img" aria-label="View cube">
            <defs>
                <filter id="cubeBlur"><feGaussianBlur stdDeviation="2"/></filter>
                <linearGradient id="cubeFace" x1="0" y1="0" x2="1" y2="1"><stop offset="0" stop-color="#fafafa"/><stop offset="1" stop-color="#d4d4d4"/></linearGradient>
            </defs>
            <path fill="#aaa" filter="url(#cubeBlur)" d="M1522 187L1542 191L1573 188L1558 194H1534z"/>
            <path fill="#e6e6e8" d="M1520 148L1542 145V191L1520 186z"/>
            <path fill="url(#cubeFace)" d="M1542 145L1575 147V187L1542 191z"/>
            <path fill="none" stroke="#aaa" stroke-dasharray="5 2" d="M1542 145L1520 148V186L1542 191L1575 187V147z"/>
            <path stroke="#5ee85e" stroke-width="1.500" d="M1518 186L1542 191"/>
            <path stroke="#f25555" stroke-width="1.500" d="M1542 191L1581 187"/>
            <path stroke="#8080f0" stroke-width="2" d="M1542 137V191"/>
            <text x="1531" y="170" class="face" font-size="7">LEFT</text>
            <text x="1559" y="171" class="face" font-size="9">FRONT</text>
            <text x="1541" y="134" class="axis" fill="#8c8cff">Z</text>
            <text x="1514" y="189" class="axis" fill="#8cf08c">Y</text>
            <text x="1584" y="191" class="axis" fill="#ff7a7a">X</text>
        </svg>

        <aside class="browser">
            <div class="panel-head">
                <svg class="collapse" viewBox="0 0 10 6"><path fill="#333" d="M5 0v6L0 3zM10 0v6L5 3z"/></svg>
                <h2>BROWSER</h2>
                <button aria-label="Minimize browser"><svg viewBox="0 0 8 8"><circle cx="4" cy="4" r="4" fill="#333"/><path stroke="#fff" d="M2 4h4"/></svg></button>
                <span class="grip"></span>
            </div>
            <ul class="tree" id="tree"></ul>
        </aside>

        <div class="panel-head comments">
            <h2>COMMENTS</h2>
            <button aria-label="Expand comments"><svg viewBox="0 0 8 8"><circle cx="4" cy="4" r="4" fill="#333"/><path stroke="#fff" d="M2 4h4M4 2v4"/></svg></button>
            <span class="grip"></span>
        </div>

        <div class="navbar">
            <button class="on has-menu" aria-label="Orbit"><svg class="s14"><use href="#i-orbit"/></svg><svg class="caret"><use href="#i-caret"/></svg></button>
            <button aria-label="Look at"><svg class="s14"><use href="#i-lookat"/></svg></button>
            <button aria-label="Pan"><svg class="s14"><use href="#i-pan"/></svg></button>
            <button aria-label="Zoom"><svg class="s14"><use href="#i-zoomw"/></svg></button>
            <button class="has-menu" aria-label="Fit"><svg class="s14"><use href="#i-zoomfit"/></svg><svg class="caret"><use href="#i-caret"/></svg></button>
            <button class="has-menu" aria-label="Display settings"><svg class="s14"><use href="#i-display"/></svg><svg class="caret"><use href="#i-caret"/></svg></button>
            <button class="has-menu" aria-label="Grid and snaps"><svg class="s14"><use href="#i-grid"/></svg><svg class="caret"><use href="#i-caret"/></svg></button>
            <button class="has-menu" aria-label="Viewports"><svg class="s14"><use href="#i-views"/></svg><svg class="caret"><use href="#i-caret"/></svg></button>
        </div>
    </main>

    <div class="timeline">
        <div class="playback">
            <button aria-label="Go to start"><svg class="s12"><use href="#i-first"/></svg></button>
            <button aria-label="Step back"><svg class="s12"><use href="#i-prev"/></svg></button>
            <button aria-label="Play"><svg class="s12"><use href="#i-play"/></svg></button>
            <button aria-label="Step forward"><svg class="s12"><use href="#i-next"/></svg></button>
            <button aria-label="Go to end"><svg class="s12"><use href="#i-last"/></svg></button>
        </div>
        <ol class="features" id="features"></ol>
        <button class="settings" aria-label="Timeline settings"><svg class="s14"><use href="#i-gear"/></svg></button>
    </div>

    <footer class="taskbar">
        <button class="start" aria-label="Start"><svg class="s14"><use href="#i-windows"/></svg></button>
        <label class="search">
            <svg class="s14"><use href="#i-search"/></svg>
            <input type="text" placeholder="Type here to search" aria-label="Type here to search">
        </label>
        <div class="apps">
            <button aria-label="Cortana"><svg><use href="#i-cortana"/></svg></button>
            <button aria-label="Task View"><svg><use href="#i-taskview"/></svg></button>
            <button aria-label="Lenovo Vantage"><svg><use href="#i-lenovo"/></svg></button>
            <button aria-label="Edge"><svg><use href="#i-edge"/></svg></button>
            <button aria-label="Mail"><svg><use href="#i-mail"/></svg></button>
            <button class="running" aria-label="File Explorer"><svg><use href="#i-explorer"/></svg></button>
            <button class="running" aria-label="Chrome"><svg><use href="#i-chrome"/></svg></button>
            <button class="running" aria-label="Opera"><svg><use href="#i-opera"/></svg></button>
            <button aria-label="Firefox"><svg><use href="#i-firefox"/></svg></button>
            <button aria-label="Home"><svg><use href="#i-home"/></svg></button>
            <button class="running" aria-label="TeX">
                <svg viewBox="0 0 20 20"><path fill="#1c1440" d="M1 1h18v18H1z"/><path fill="#3a2f9a" d="M1 1h18v6L1 12z"/><path fill="#ded25a" d="m4 3 4 4-4 1z"/><text x="12" y="17" class="tex">TEX</text></svg>
            </button>
            <button class="running" aria-label="MATLAB"><svg><use href="#i-matlab"/></svg></button>
            <button class="running" aria-label="McAfee"><svg><use href="#i-mcafee"/></svg></button>
            <button class="running" aria-label="Excel"><svg><use href="#i-excel"/></svg></button>
            <button class="running" aria-label="Photos"><svg><use href="#i-photos"/></svg></button>
            <button class="running current" aria-label="Fusion 360"><svg><use href="#i-fusion"/></svg></button>
        </div>
        <div class="tray">
            <button class="weather"><svg><use href="#i-weather"/></svg><span>16°C</span><span>Mostly cloudy</span></button>
            <div class="tray-icons">
                <button aria-label="Show hidden icons"><svg class="s14"><use href="#i-chevron"/></svg></button>
                <button aria-label="Battery"><svg class="s14"><use href="#i-battery"/></svg></button>
                <button aria-label="Network"><svg class="s14"><use href="#i-wifi"/></svg></button>
                <button aria-label="Volume"><svg class="s14"><use href="#i-volume"/></svg></button>
                <button aria-label="Meet now"><svg class="s14"><use href="#i-meet"/></svg></button>
            </div>
            <button class="lang">ENG</button>
            <time class="clock" datetime="2021-10-28T11:55"><span>11:55 AM</span><span>10/28/2021</span></time>
            <button class="notes" aria-label="Notifications"><svg><use href="#i-note"/></svg><span class="count">21</span></button>
        </div>
    </footer>

    <script src="script.js"></script>
</body>
</html>
```
FILE: styles.css
```css
:root {
    --panel: #f0f0f0;
    --text: #444;
    --blue: #0a94de;
    --ui: Roboto, "Liberation Sans", sans-serif;
    --sys: "Open Sans", "Noto Sans", sans-serif;
}

* {
    box-sizing: border-box;
}

body {
    margin: 0;
    height: 100vh;
    display: flex;
    flex-direction: column;
    overflow: hidden;
    background: #fff;
    color: var(--text);
    font-family: var(--ui);
    font-size: 9px;
}

button {
    display: flex;
    align-items: center;
    justify-content: center;
    border: 0;
    padding: 0;
    background: none;
    color: inherit;
    font: inherit;
}

h1, h2, ul, ol {
    margin: 0;
    padding: 0;
    font-weight: normal;
    list-style: none;
}

a {
    color: inherit;
    text-decoration: none;
}

svg {
    display: block;
    flex: none;
}

.sprite {
    position: absolute;
    width: 0;
    height: 0;
}

.s8 { width: 8px; height: 8px; }
.s12 { width: 12px; height: 12px; }
.s14 { width: 14px; height: 14px; }
.caret { width: 6px; height: 6px; }

/* title bar */
.titlebar {
    display: flex;
    align-items: center;
    height: 19px;
    padding: 0 2px;
    color: #111;
}

.app-icon {
    width: 13px;
    height: 13px;
    margin-right: 4px;
}

.titlebar h1 {
    font-family: Lato, var(--sys);
    font-size: 10px;
}

.window-controls {
    display: flex;
    margin-left: auto;
}

.window-controls button {
    width: 38px;
    height: 17px;
}

.window-controls svg {
    width: 9px;
    height: 9px;
}

/* document tabs */
.docbar {
    display: flex;
    align-items: stretch;
    height: 27px;
    background: #c9c9c9;
    padding-top: 3px;
}

.quick-access {
    display: flex;
    align-items: center;
    gap: 15px;
    width: 161px;
    padding: 0 0 3px 7px;
    color: #666;
}

.quick-access button {
    gap: 5px;
}

.quick-access .faded {
    color: #999;
    margin-left: -5px;
}

.file-icon {
    width: 12px;
    height: 14px;
}

.doc-tab {
    flex: 1;
    display: flex;
    align-items: center;
    padding: 0 2px 0 8px;
    background: #b9b9b9;
    border-radius: 3px 3px 0 0;
    font-size: 10px;
    margin-right: 3px;
}

.doc-tab.active {
    background: var(--panel);
    color: #333;
}

.doc-name {
    flex: 1;
    display: flex;
    align-items: center;
    justify-content: center;
    gap: 3px;
}

.doc-tab button {
    width: 16px;
    height: 16px;
    color: #777;
}

.new-tab {
    width: 23px;
    background: #b9b9b9;
    border-radius: 3px 3px 0 0;
}

.new-tab svg {
    width: 10px;
    height: 10px;
}

.account {
    display: flex;
    align-items: center;
    gap: 14px;
    padding: 0 10px 3px;
    color: #333;
}

.account .jobs {
    gap: 3px;
    margin-right: 6px;
}

.account .avatar {
    width: 20px;
    height: 20px;
    border-radius: 50%;
    background: #e9e9e9;
    color: #555;
}

/* ribbon */
.ribbon {
    display: flex;
    height: 68px;
    background: var(--panel);
    border-bottom: 1px solid #dcdcdc;
}

.workspace {
    gap: 5px;
    width: 92px;
    height: 51px;
    margin: 8px 3px 0 10px;
    border: 1px solid #d6d6d6;
    border-radius: 4px;
    font-weight: 700;
    color: #333;
}

.ribbon-tabs {
    display: flex;
    gap: 19px;
    height: 19px;
    padding-left: 10px;
}

.ribbon-tabs a {
    padding: 3px 10px 0;
    line-height: 12px;
}

.ribbon-tabs .active {
    color: var(--blue);
    border-bottom: 2px solid var(--blue);
}

.tool-groups {
    display: flex;
}

.tool-group {
    display: flex;
    flex-direction: column;
    align-items: center;
    padding: 3px 8px 0 7px;
    border-left: 1px solid #dadada;
    height: 45px;
}

.tool-group:first-child {
    border-left: 0;
}

.tool-group.single {
    padding: 3px 9px 0;
}

.tools {
    display: flex;
    gap: 8px;
}

.tools svg {
    width: 28px;
    height: 28px;
}

.group-label {
    gap: 3px;
    height: 12px;
    margin-top: 4px;
    color: #333;
}

/* canvas and overlays */
.canvas {
    position: relative;
    flex: 1;
    min-height: 0;
    background: #fefefe;
}

.model {
    width: 100%;
    height: 100%;
}

.edge {
    stroke: #262623;
    stroke-width: 1;
}

path.edge:not([fill]) {
    fill: none;
}

.edge.thin {
    stroke-opacity: .5;
}

.viewcube {
    position: absolute;
    top: 6px;
    right: 8px;
    width: 84px;
    height: 80px;
}

.face, .axis {
    font-family: var(--ui);
    font-weight: 700;
    text-anchor: middle;
}

.face {
    fill: #909096;
}

.axis {
    font-size: 11px;
    font-weight: 400;
}

.browser {
    position: absolute;
    top: 3px;
    left: 3px;
    width: 250px;
}

.panel-head {
    display: flex;
    align-items: center;
    width: 250px;
    height: 21px;
    padding-left: 20px;
    background: #efefef;
    border: 1px solid #dadada;
    color: #666;
}

.panel-head h2 {
    font-size: 9px;
}

.panel-head button {
    margin-left: auto;
    margin-right: 5px;
}

.panel-head button svg {
    width: 8px;
    height: 8px;
}

.browser .panel-head {
    padding-left: 4px;
}

.collapse {
    width: 8px;
    height: 5px;
    margin-right: 8px;
}

.grip {
    width: 3px;
    height: 10px;
    border-left: 1px solid #888;
    border-right: 1px solid #bbb;
}

.comments {
    position: absolute;
    left: 3px;
    bottom: 4px;
}

.tree {
    padding: 5px 0 0 13px;
    font-family: "Liberation Sans", Arial, sans-serif;
    display: flex;
    flex-direction: column;
    gap: 4px;
}

.tree li {
    display: flex;
    align-items: center;
    height: 16px;
}

.tree .level-1 { padding-left: 15px; }
.tree .level-2 { padding-left: 30px; }

.toggle {
    width: 17px;
    height: 16px;
    justify-content: flex-start;
}

.toggle svg {
    width: 11px;
    height: 12px;
}

.chip {
    display: flex;
    align-items: center;
    gap: 7px;
    height: 16px;
    padding: 0 9px 0 2px;
    background: #f1f1f1;
}

.chip .eye svg {
    width: 14px;
    height: 10px;
}

.chip .label {
    margin-left: 4px;
}

.root .chip {
    gap: 4px;
}

.root .picked {
    display: flex;
    align-items: center;
    gap: 8px;
    height: 14px;
    padding: 0 7px 0 2px;
    background: #969696;
    color: #fff;
    font-weight: 700;
}

.root input {
    appearance: none;
    width: 11px;
    height: 11px;
    margin: 0;
    border: 1px solid #555;
    border-radius: 50%;
    background: radial-gradient(circle, #333 0 2px, transparent 3px);
}

.navbar {
    position: absolute;
    left: 701px;
    bottom: 3px;
    display: flex;
    height: 20px;
    background: var(--panel);
    color: #333;
}

.navbar button {
    padding: 0 4px;
}

.navbar .has-menu {
    gap: 2px;
    padding: 0 3px;
}

.navbar .caret {
    width: 5px;
}

.navbar .on {
    background: var(--blue);
    color: #fff;
}

/* timeline */
.timeline {
    display: flex;
    height: 42px;
    background: var(--panel);
    border-top: 2px solid #cfcfcf;
}

.playback {
    display: flex;
    align-items: center;
    gap: 9px;
    width: 118px;
    padding-left: 8px;
}

.features {
    display: flex;
    padding-top: 9px;
}

.features li {
    position: relative;
    width: 20px;
    height: 25px;
    padding: 3px;
    border-bottom: 2px solid #ccc;
}

/* tick between the icon and the track */
.features li::after {
    content: "";
    position: absolute;
    left: 10px;
    bottom: 0;
    width: 1px;
    height: 4px;
    background: #bbb;
}

.features li:first-child {
    border-image: linear-gradient(to right, transparent 50%, #ccc 50%) 2;
}

.features li:last-child {
    border-image: linear-gradient(to left, transparent 50%, #ccc 50%) 2;
}

.features .off .s14 {
    opacity: .25;
}

.features .hot {
    background: linear-gradient(#e6e61e 0 20px, transparent 20px);
}

.features .marker {
    position: absolute;
    left: 15px;
    top: -2px;
    width: 10px;
    height: 28px;
    z-index: 1;
}

.settings {
    margin-left: auto;
    margin-right: 11px;
}

/* taskbar */
.taskbar {
    display: flex;
    height: 33px;
    background: linear-gradient(90deg, #ead9d0 0, #ead9d0 22%, #dde2e8 36%, #dee1e6 46%, #e8dad2 54%, #e9dbd4 80%, #e3dad6);
    font-family: var(--sys);
    font-size: 10px;
    color: #111;
}

.start {
    width: 40px;
}

.search {
    display: flex;
    align-items: center;
    gap: 8px;
    width: 286px;
    height: 32px;
    padding-left: 10px;
    background: #fff;
    border: 1px solid #ccc;
}

.search input {
    flex: 1;
    min-width: 0;
    border: 0;
    padding: 0;
    background: none;
    outline: 0;
    font: 12px var(--sys);
}

.search input::placeholder {
    color: #444;
    opacity: 1;
}

.apps {
    display: flex;
}

.apps button {
    position: relative;
    width: 41px;
}

.apps svg {
    width: 20px;
    height: 20px;
}

.tex {
    font: 7px "Liberation Serif", serif;
    text-anchor: middle;
    fill: #e8b93c;
}

.running::after {
    content: "";
    position: absolute;
    left: 4px;
    right: 4px;
    bottom: 0;
    height: 2px;
    background: #2f78c4;
}

.current {
    background: #f5efec;
}

.current::after {
    left: 0;
    right: 0;
}

.tray {
    display: flex;
    align-items: center;
    margin-left: auto;
    padding-right: 3px;
}

.weather {
    gap: 8px;
    margin-right: 9px;
    font-size: 11px;
}

.weather svg {
    width: 18px;
    height: 14px;
}

.tray-icons {
    display: flex;
}

.tray-icons button {
    width: 20px;
}

.lang {
    margin: 0 5px;
}

.clock {
    display: flex;
    flex-direction: column;
    align-items: center;
    line-height: 15px;
}

.notes {
    position: relative;
    width: 42px;
    height: 33px;
    border-right: 1px solid #bbb;
    justify-content: flex-start;
    padding-left: 12px;
}

.notes svg {
    width: 15px;
    height: 13px;
}

.count {
    position: absolute;
    left: 18px;
    top: 15px;
    width: 15px;
    height: 15px;
    border: 1px solid #999;
    border-radius: 50%;
    background: #d5d2d0;
    font-size: 9px;
    line-height: 13px;
    text-align: center;
}
```
FILE: script.js
```js
// [name, level, arrow, eye, icon]
const rows = [
    ['Document Settings', 1, 'closed', '', 'gear'],
    ['Named Views', 1, 'closed', '', 'folder'],
    ['Origin', 1, 'closed', 'eyeoff', 'folder'],
    ['Bodies', 1, 'open', 'eye', 'folder'],
    ['Body5', 2, '', 'eye', 'body'],
    ['Sketches', 1, 'open', 'eye', 'folder']
];

const lockedSketches = [28, 29, 36, 37, 38];
[24, 25, 26, 27, 28, 29, 35, 36, 37, 38, 39, 41, 42].forEach(n => {
    rows.push([`Sketch${n}`, 2, '', 'eyeoff', lockedSketches.includes(n) ? 'locked' : 'sketch']);
});

rows.push(['Construction', 1, 'open', 'eye', 'folder']);
for (let n = 21; n <= 28; n++) {
    rows.push([`Plane${n}`, 2, '', 'eyeoff', 'cplane']);
}

const icon = (name, cls = 's14') => `<svg class="${cls}"><use href="#i-${name}"/></svg>`;

const toggle = (arrow, name) => arrow
    ? `<button class="toggle" aria-label="Expand ${name}">${icon(arrow, '')}</button>`
    : '<span class="toggle"></span>';

const eyeButton = (eye, name) => eye
    ? `<button class="eye" aria-label="Show or hide ${name}">${icon(eye, '')}</button>`
    : '';

const root = `<li class="root">${toggle('open', 'PUMARIB')}
    <div class="chip">${eyeButton('eye', 'PUMARIB')}
        <span class="picked">${icon('cube')}<span class="label">PUMARIB v24</span></span>
        <input type="radio" aria-label="Activate PUMARIB v24">
    </div></li>`;

document.getElementById('tree').innerHTML = root + rows.map(([name, level, arrow, eye, type]) =>
    `<li class="level-${level}">${toggle(arrow, name)}
        <div class="chip">${eyeButton(eye, name)}${icon(type)}<span class="label">${name}</span></div></li>`
).join('');

// one entry per timeline feature
const features = ('sketch sketch plane sketch sketch plane sketch plane sketch cyl plane fillet cyl fillet ' +
    'delete move fillet move hull plane sketch plane sketch sketch sketch sketch hull shape plane ' +
    'sketch sketch plane sketch plane sketch').split(' ');
const markerAt = 30;
const highlighted = 33;

document.getElementById('features').innerHTML = features.map((type, i) => {
    const cls = (i > markerAt ? 'off' : '') + (i === highlighted ? ' hot' : '');
    const marker = i === markerAt ? icon('marker', 'marker') : '';
    return `<li class="${cls}">${icon(type)}${marker}</li>`;
}).join('');
```
